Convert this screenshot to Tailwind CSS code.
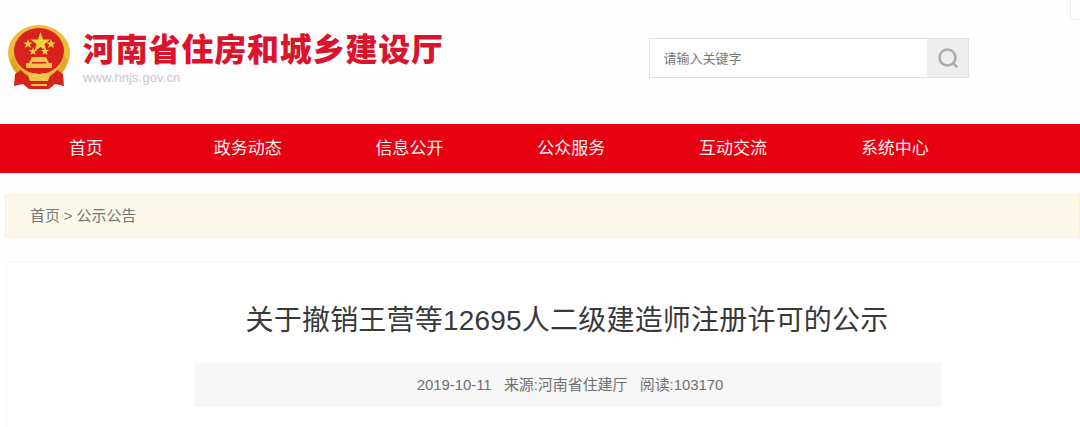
<!DOCTYPE html>
<html lang="zh">
<head>
<meta charset="utf-8">
<script src="https://cdn.jsdelivr.net/npm/@tailwindcss/browser@4"></script>
</head>
<body class="m-0 h-[427px] w-[1080px] overflow-hidden bg-[#fefefe] font-['Liberation_Sans','Noto_Sans_CJK_SC',sans-serif]">
<header class="relative flex h-[124px] items-start">
  <svg class="ml-[8px] mt-[25px] shrink-0" width="63" height="65" viewBox="0 0 63 65">
    <ellipse cx="31" cy="28" rx="31" ry="28" fill="#eebd3e"/>
    <ellipse cx="31" cy="26" rx="25" ry="23" fill="#d8231c"/>
    <path d="M6 30 Q9 46 22 50 L40 50 Q53 46 56 30 L60 36 Q56 52 40 56 L22 56 Q6 52 2 36Z" fill="#e3a526"/>
    <path d="M7 49 L13 45 Q20 54 31 54 Q42 54 49 45 L55 49 L56 61 L47 59 L41 64 L21 64 L15 59 L6 61Z" fill="#d8231c"/>
    <path d="M20 50 Q26 46 31 50 Q36 46 42 50 L40 56 L22 56Z" fill="#f0c64a"/>
    <rect x="23" y="59" width="16" height="2" fill="#f0c64a"/>
    <path d="M31.5 8 L34 15.4 41.6 15.4 35.5 20 37.7 27.4 31.5 23 25.3 27.4 27.5 20 21.4 15.4 29 15.4Z" transform="translate(1 -1)" fill="#f5d23c"/>
    <path d="M20 14 L21.2 17.4 24.8 17.4 21.9 19.6 23 23 20 20.9 17 23 18.1 19.6 15.2 17.4 18.8 17.4Z" fill="#f5d23c"/>
    <path d="M43 14 L44.2 17.4 47.8 17.4 44.9 19.6 46 23 43 20.9 40 23 41.1 19.6 38.2 17.4 41.8 17.4Z" fill="#f5d23c"/>
    <path d="M25 22 L26 25 29.2 25 26.6 26.9 27.6 30 25 28.2 22.4 30 23.4 26.9 20.8 25 24 25Z" fill="#f5d23c"/>
    <path d="M37 22 L38 25 41.2 25 38.6 26.9 39.6 30 37 28.2 34.4 30 35.4 26.9 32.8 25 36 25Z" fill="#f5d23c"/>
    <path d="M21 38 L24 32 L38 32 L41 38 L44 38 L44 43 L18 43 L18 38Z" fill="#f0c64a"/>
    <rect x="24" y="37" width="14" height="1.5" fill="#d8231c"/>
  </svg>
  <div class="ml-[12px] mt-[32px] flex flex-col">
    <div class="text-[32px] leading-[36px] font-black tracking-[0.8px] whitespace-nowrap text-[#d9142c]">河南省住房和城乡建设厅</div>
    <div class="mt-[1px] text-[13px] leading-[17px] text-[#c8c8c8] tracking-[0.1px]">www.hnjs.gov.cn</div>
  </div>
  <div class="absolute left-[649px] top-[38px] flex h-[40px] w-[320px] border border-[#e0e0e0] bg-white">
    <div class="flex flex-1 items-center pl-[13.5px] pt-[2px] text-[13px] text-[#777]">请输入关键字</div>
    <div class="flex w-[41px] items-center justify-center bg-[#eeeeee]">
      <svg width="22" height="22" viewBox="0 0 22 22" fill="none" stroke="#adadad" stroke-width="2.6" stroke-linecap="round"><circle cx="10.5" cy="10.5" r="8"/><path d="M16.5 16.5 L19.5 19.5"/></svg>
    </div>
  </div>
  <div class="absolute right-0 top-0 h-[20px] w-[10px] border-b border-l border-[#f0f0f0]"></div>
</header>
<nav class="flex h-[49px] bg-[#e60012] pl-[5px] text-[17px] text-[#fdeef0]">
  <a class="flex w-[161.8px] items-center justify-center">首页</a>
  <a class="flex w-[161.8px] items-center justify-center">政务动态</a>
  <a class="flex w-[161.8px] items-center justify-center">信息公开</a>
  <a class="flex w-[161.8px] items-center justify-center">公众服务</a>
  <a class="flex w-[161.8px] items-center justify-center">互动交流</a>
  <a class="flex w-[161.8px] items-center justify-center">系统中心</a>
</nav>
<div class="ml-[5px] mt-[21px] flex h-[44px] items-center border border-[#f6f2dc] bg-[#fcf9ea] pl-[24px] text-[15px] text-[#777] tracking-[-0.1px]">首页 &gt; 公示公告</div>
<main class="ml-[6px] mt-[23px] h-[166px] border-l border-t border-[#f5f5f5] bg-white">
  <h1 class="mt-[27px] pl-[47px] text-center text-[28px] leading-[64px] tracking-[0.2px] font-normal text-[#3a3a3a] whitespace-nowrap">关于撤销王营等12695人二级建造师注册许可的公示</h1>
  <div class="ml-[187px] mt-[10px] flex h-[44px] w-[747px] items-center justify-center bg-[#f7f7f8] pl-[5px] text-[15px] tracking-[-0.07px] text-[#707070] whitespace-pre">2019-10-11   来源:河南省住建厅   阅读:103170</div>
</main>
</body>
</html>
